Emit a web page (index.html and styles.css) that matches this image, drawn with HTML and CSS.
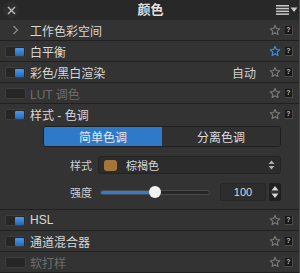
FILE: index.html
```html
<!DOCTYPE html>
<html lang="zh">
<head>
<meta charset="utf-8">
<link rel="stylesheet" href="styles.css">
</head>
<body>
<div class="panel">
  <div class="titlebar">
    <span class="close"><svg width="9" height="9" viewBox="0 0 9 9"><path d="M1 1L8 8M8 1L1 8" stroke="#bdbdbd" stroke-width="1.4"/></svg></span>
    <span class="title">颜色</span>
    <span class="menu"><svg width="22" height="10" viewBox="0 0 22 10"><g fill="#c8c8c8"><rect x="0" y="0" width="13" height="1.5"/><rect x="0" y="2.8" width="13" height="1.5"/><rect x="0" y="5.6" width="13" height="1.5"/><rect x="0" y="8.4" width="13" height="1.5"/><path d="M14.5 2.5h7l-3.5 4.5z"/></g></svg></span>
  </div>

  <div class="row">
    <span class="lead"><svg width="7" height="10" viewBox="0 0 7 10"><path d="M1.5 1l4 4-4 4" fill="none" stroke="#8a8a8a" stroke-width="1.3"/></svg></span>
    <span class="label">工作色彩空间</span>
    <span class="actions"><svg class="star" viewBox="0 0 24 24"><path d="M12 2.8l2.8 6.2 6.7.7-5 4.6 1.4 6.7L12 17.6l-5.9 3.4 1.4-6.7-5-4.6 6.7-.7z"/></svg><span class="help">?</span></span>
  </div>

  <div class="row">
    <span class="lead"><span class="toggle on"></span></span>
    <span class="label">白平衡</span>
    <span class="actions"><svg class="star fav" viewBox="0 0 24 24"><path d="M12 2.8l2.8 6.2 6.7.7-5 4.6 1.4 6.7L12 17.6l-5.9 3.4 1.4-6.7-5-4.6 6.7-.7z"/></svg><span class="help">?</span></span>
  </div>

  <div class="row">
    <span class="lead"><span class="toggle on"></span></span>
    <span class="label">彩色/黑白渲染</span>
    <span class="actions"><span class="auto">自动</span><svg class="star" viewBox="0 0 24 24"><path d="M12 2.8l2.8 6.2 6.7.7-5 4.6 1.4 6.7L12 17.6l-5.9 3.4 1.4-6.7-5-4.6 6.7-.7z"/></svg><span class="help">?</span></span>
  </div>

  <div class="row">
    <span class="lead"><span class="toggle"></span></span>
    <span class="label dim">LUT 调色</span>
    <span class="actions"><svg class="star" viewBox="0 0 24 24"><path d="M12 2.8l2.8 6.2 6.7.7-5 4.6 1.4 6.7L12 17.6l-5.9 3.4 1.4-6.7-5-4.6 6.7-.7z"/></svg><span class="help">?</span></span>
  </div>

  <div class="section">
    <div class="row head">
      <span class="lead"><span class="toggle on"></span></span>
      <span class="label">样式 - 色调</span>
      <span class="actions"><svg class="star" viewBox="0 0 24 24"><path d="M12 2.8l2.8 6.2 6.7.7-5 4.6 1.4 6.7L12 17.6l-5.9 3.4 1.4-6.7-5-4.6 6.7-.7z"/></svg><span class="help">?</span></span>
    </div>
    <div class="content">
      <div class="segment">
        <span class="seg active">简单色调</span>
        <span class="seg">分离色调</span>
      </div>
      <div class="field">
        <span class="flabel">样式</span>
        <div class="select">
          <span class="swatch"></span>
          <span class="svalue">棕褐色</span>
          <svg class="updown" width="7" height="10" viewBox="0 0 7 10"><path d="M3.5 0.5L6.5 4H0.5z M3.5 9.5L6.5 6H0.5z" fill="#b0b0b0"/></svg>
        </div>
      </div>
      <div class="field">
        <span class="flabel">强度</span>
        <div class="slider">
          <div class="track"><div class="fill" style="width:55px"></div></div>
          <span class="thumb" style="left:55px"></span>
        </div>
        <span class="number">100</span>
        <span class="stepper">
          <svg width="12" height="18" viewBox="0 0 12 18"><path d="M6 3L9.5 7.5H2.5z M6 15L9.5 10.5H2.5z" fill="#d8d8d8"/><rect x="1" y="8.5" width="10" height="1" fill="#444"/></svg>
        </span>
      </div>
    </div>
  </div>

  <div class="row">
    <span class="lead"><span class="toggle on"></span></span>
    <span class="label">HSL</span>
    <span class="actions"><svg class="star" viewBox="0 0 24 24"><path d="M12 2.8l2.8 6.2 6.7.7-5 4.6 1.4 6.7L12 17.6l-5.9 3.4 1.4-6.7-5-4.6 6.7-.7z"/></svg><span class="help">?</span></span>
  </div>

  <div class="row">
    <span class="lead"><span class="toggle on"></span></span>
    <span class="label">通道混合器</span>
    <span class="actions"><svg class="star" viewBox="0 0 24 24"><path d="M12 2.8l2.8 6.2 6.7.7-5 4.6 1.4 6.7L12 17.6l-5.9 3.4 1.4-6.7-5-4.6 6.7-.7z"/></svg><span class="help">?</span></span>
  </div>

  <div class="row">
    <span class="lead"><span class="toggle"></span></span>
    <span class="label dim">软打样</span>
    <span class="actions"><svg class="star" viewBox="0 0 24 24"><path d="M12 2.8l2.8 6.2 6.7.7-5 4.6 1.4 6.7L12 17.6l-5.9 3.4 1.4-6.7-5-4.6 6.7-.7z"/></svg><span class="help">?</span></span>
  </div>
</div>
</body>
</html>
```

FILE: styles.css
```css
* { box-sizing: border-box; }
html, body {
  margin: 0;
  padding: 0;
  background: #333333;
}
body {
  font-family: "Liberation Sans", "Noto Sans CJK SC", sans-serif;
  color: #d6d6d6;
}
.panel {
  width: 300px;
  height: 273px;
  background: #333333;
  border-right: 1px solid #4c4c4c;
  overflow: hidden;
}
.titlebar {
  height: 20px;
  background: #282828;
  display: grid;
  grid-template-columns: 1fr auto 1fr;
  align-items: center;
  padding: 0 1px 0 3px;
}
.close {
  justify-self: start;
  width: 16px;
  height: 16px;
  border-radius: 50%;
  background: #2e2e2e;
  display: flex;
  align-items: center;
  justify-content: center;
}
.title {
  font-size: 13px;
  line-height: 20px;
  color: #e0e0e0;
  font-weight: bold;
}
.menu {
  justify-self: end;
  display: flex;
  align-items: center;
}
.row {
  height: 21px;
  border-bottom: 1px solid #202020;
  display: flex;
  align-items: center;
  padding: 0 6px 0 5px;
}
.section {
  border-bottom: 1px solid #202020;
}
.row.head {
  border-bottom: none;
  height: 20px;
}
.lead {
  width: 21px;
  margin-right: 4px;
  display: flex;
  align-items: center;
  justify-content: center;
}
.toggle {
  width: 21px;
  height: 11px;
  border: 1px solid #3e3e3e;
  border-radius: 2px;
  background: #262626;
  display: flex;
  justify-content: flex-end;
  padding: 1px;
}
.toggle.on::after {
  content: "";
  width: 9px;
  height: 8px;
  border-radius: 1px;
  background: linear-gradient(#4a9ae8, #2469b8);
}
.label {
  font-size: 12px;
  color: #d8d8d8;
}
.label.dim {
  color: #6c6c6c;
}
.actions {
  margin-left: auto;
  display: flex;
  align-items: center;
}
.auto {
  font-size: 12px;
  color: #cfcfcf;
  margin-right: 13px;
}
.star {
  width: 12px;
  height: 12px;
  fill: none;
  stroke: #7c7c7c;
  stroke-width: 2.2;
  stroke-linejoin: round;
}
.star.fav {
  stroke: #3d8fe6;
}
.help {
  margin-left: 4px;
  width: 8px;
  height: 9px;
  background: #181818;
  border-right: 1px solid #4c4c4c;
  border-bottom: 1px solid #4c4c4c;
  color: #bcbcbc;
  font-size: 7px;
  font-weight: bold;
  line-height: 8px;
  text-align: center;
}
.content {
  padding: 2px 18px 8px 43px;
  display: flex;
  flex-direction: column;
  gap: 8px;
}
.segment {
  display: flex;
  height: 21px;
  border: 1px solid #1f1f1f;
  border-radius: 3px;
  overflow: hidden;
}
.seg {
  flex: 1;
  display: flex;
  align-items: center;
  justify-content: center;
  font-size: 12px;
  color: #dcdcdc;
  background: #303030;
}
.seg.active {
  background: #2f79c9;
  color: #eaeaea;
}
.field {
  display: flex;
  align-items: center;
  height: 18px;
  margin-top: 1px;
}
.flabel {
  width: 49px;
  flex: none;
  white-space: nowrap;
  text-align: right;
  font-size: 11px;
  color: #cfcfcf;
  margin-right: 6px;
}
.select {
  flex: 1;
  height: 18px;
  background: #2c2c2c;
  border: 1px solid #232323;
  border-radius: 3px;
  display: flex;
  align-items: center;
  padding: 0 5px 0 5px;
}
.swatch {
  width: 13px;
  height: 11px;
  border-radius: 3px;
  background: #a57637;
  margin-right: 9px;
}
.svalue {
  font-size: 11px;
  color: #dadada;
}
.updown {
  margin-left: auto;
}
.slider {
  position: relative;
  width: 110px;
  height: 18px;
  margin-left: 2px;
  display: flex;
  align-items: center;
}
.track {
  width: 110px;
  height: 5px;
  border-radius: 3px;
  background: #262626;
  border: 1px solid #4a4a4a;
  overflow: hidden;
}
.fill {
  height: 100%;
  background: #2f7cd0;
}
.thumb {
  position: absolute;
  top: 3px;
  width: 12px;
  height: 12px;
  margin-left: -6px;
  border-radius: 50%;
  background: #f2f2f2;
}
.number {
  width: 46px;
  height: 18px;
  margin-left: 10px;
  background: #2d2d2d;
  border: 1px solid #262626;
  border-radius: 2px;
  font-size: 11px;
  color: #d8d8d8;
  display: flex;
  align-items: center;
  justify-content: center;
}
.stepper {
  margin-left: 3px;
  width: 12px;
  height: 18px;
  background: #1f1f1f;
  border-radius: 2px;
  display: flex;
}
```
